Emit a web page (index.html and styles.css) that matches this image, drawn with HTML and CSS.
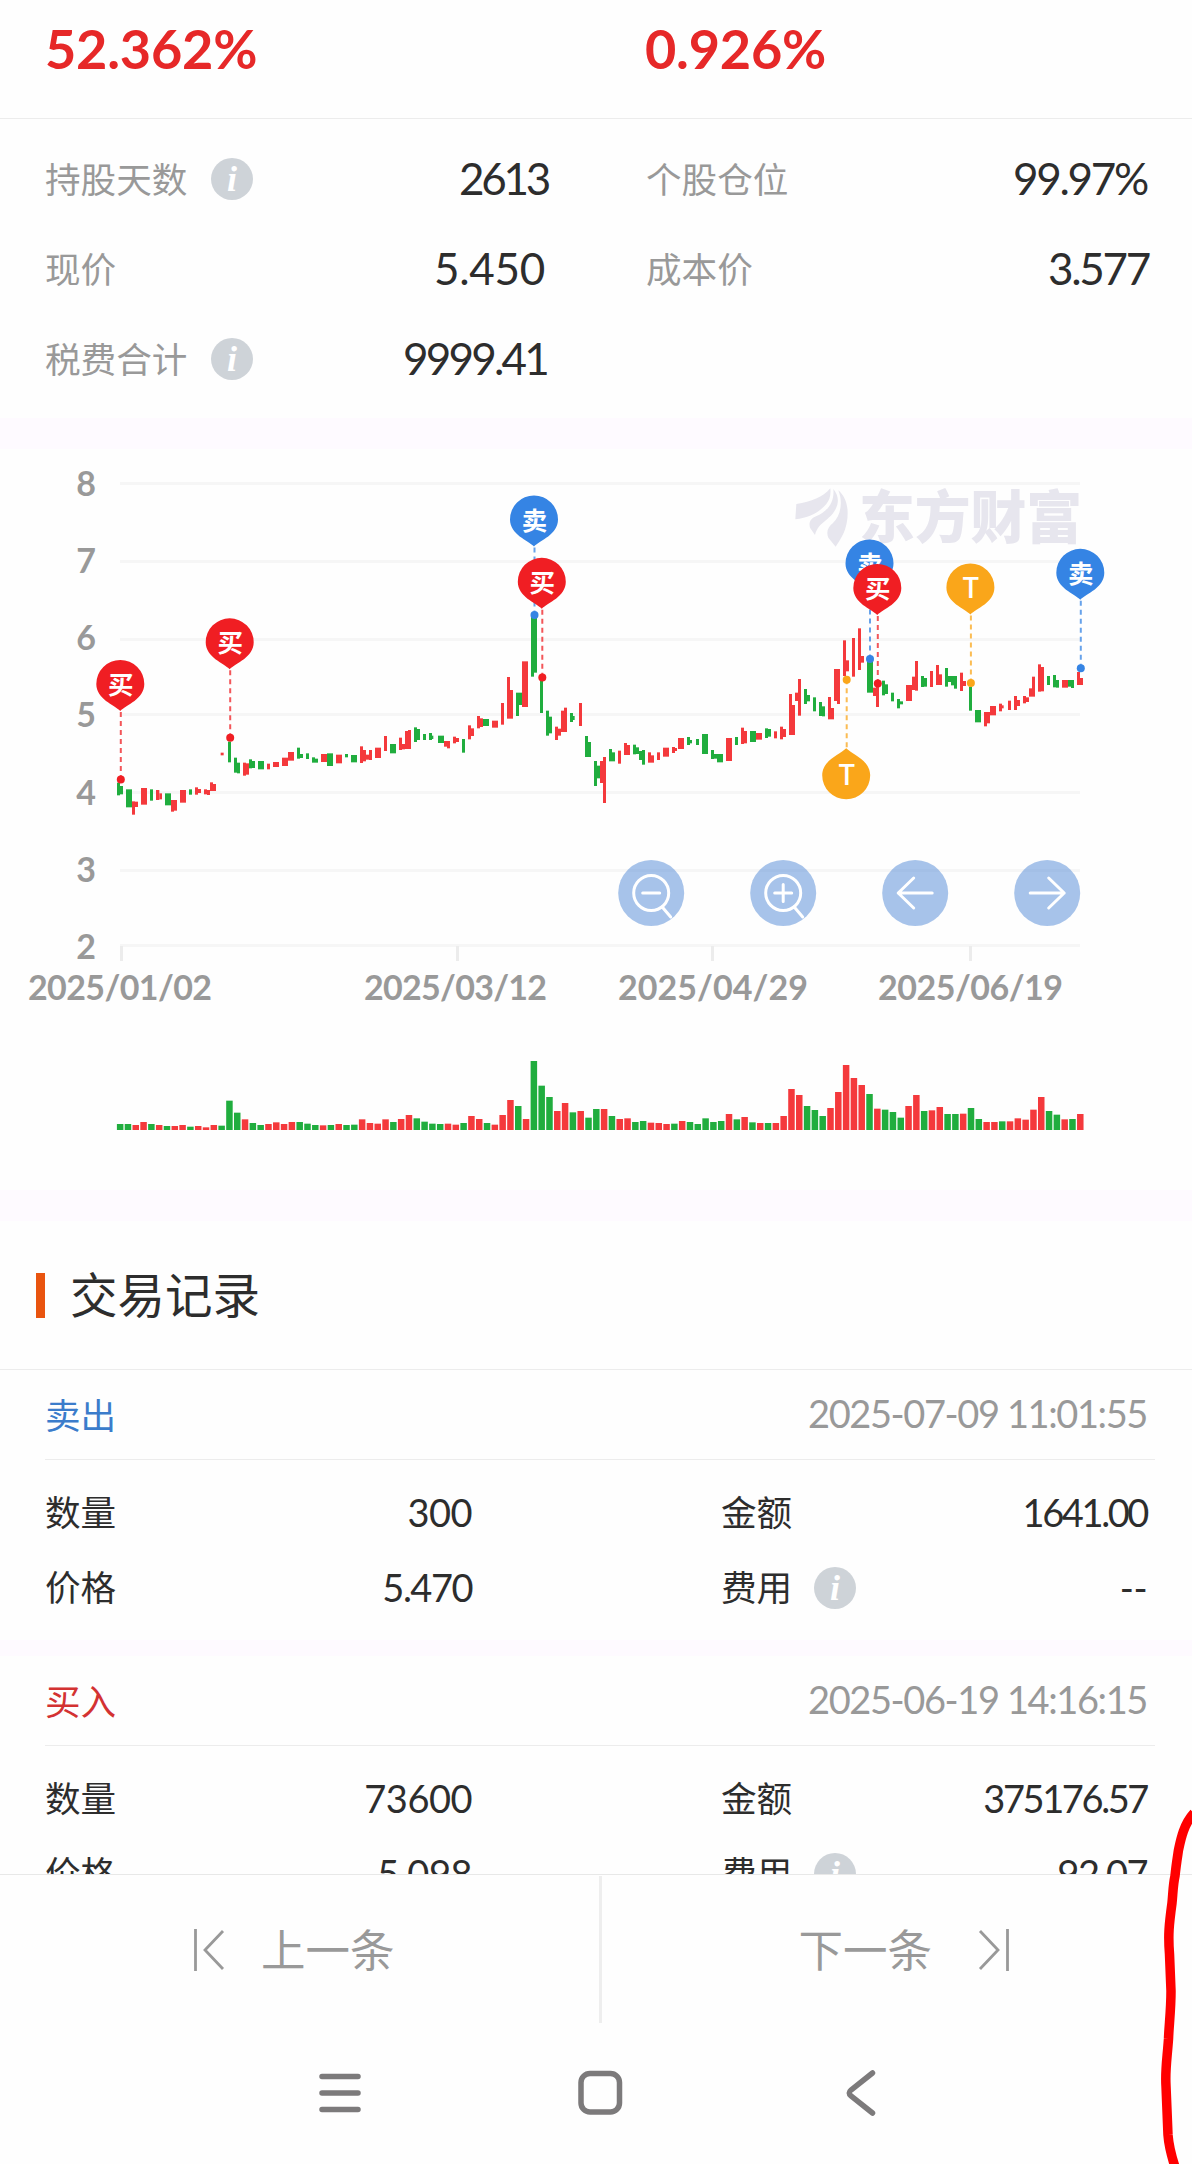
FILE: index.html
```html
<!DOCTYPE html>
<html lang="zh-CN">
<head>
<meta charset="utf-8">
<title>交易记录</title>
<link rel="stylesheet" href="styles.css">
</head>
<body>
<svg class="defs" width="0" height="0">
  <symbol id="info" viewBox="0 0 42 42">
    <circle cx="21" cy="21" r="21" fill="#ced3d8"/>
    <text x="21" y="33" text-anchor="middle" class="info-i">i</text>
  </symbol>
</svg>
<main class="screen">
  <section class="rates">
    <strong>52.362%</strong>
    <strong>0.926%</strong>
  </section>
  <section class="stats">
    <div class="stat"><span>持股天数</span><svg class="info"><use href="#info"/></svg><b class="n2613">2613</b></div>
    <div class="stat"><span>个股仓位</span><b class="pct">99.97%</b></div>
    <div class="stat"><span>现价</span><b class="price">5.450</b></div>
    <div class="stat"><span>成本价</span><b class="cost">3.577</b></div>
    <div class="stat"><span>税费合计</span><svg class="info"><use href="#info"/></svg><b class="fee">9999.41</b></div>
  </section>
  <section class="chart">
    <svg id="chart" viewBox="0 449 1192 741" width="1192" height="741">
      <g class="grid">
        <path d="M120 483.5H1080M120 561.5H1080M120 639.5H1080M120 714.5H1080M120 792.5H1080M120 870.5H1080M120 945.5H1080"/>
        <path class="ticks" d="M121.5 946V961M457.5 946V961M712.5 946V961M970.5 946V961"/>
      </g>
      <g class="axis" text-anchor="end">
        <text x="96" y="495.5">8</text><text x="96" y="573">7</text><text x="96" y="650">6</text><text x="96" y="727">5</text><text x="96" y="805">4</text><text x="96" y="881.500">3</text><text x="96" y="959">2</text>
      </g>
      <g class="axis">
        <text x="28" y="1000" textLength="184">2025/01/02</text>
        <text x="364" y="1000" textLength="183">2025/03/12</text>
        <text x="618" y="1000" textLength="190">2025/04/29</text>
        <text x="878" y="1000" textLength="185">2025/06/19</text>
      </g>
      <g class="brand">
        <g transform="translate(760 460) scale(.33333)">
          <path d="M106 178L109 132C155 125 188 112 211 85C213 105 209 120 199 132C176 158 148 173 106 178Z"/>
          <path d="M220 87C235 105 238 125 227 147C209 183 176 184 165 225L151 205C145 190 150 176 168 169C202 154 224 128 220 87Z"/>
          <path d="M235 91C263 116 267 153 260 190C254 220 241 239 227 260L205 233C198 216 203 202 219 189C241 169 250 128 235 91Z"/>
        </g>
        <text x="859" y="538" textLength="223" lengthAdjust="spacingAndGlyphs">东方财富</text>
      </g>
      <g id="candles"></g>
      <g id="volume"></g>
      <g id="pins"></g>
      <g class="tools">
        <g transform="translate(651.200 893)"><circle r="33"/><circle class="ln" r="17.500"/><path d="M-8.500 0H8.500M11 14L19.500 24"/></g>
        <g transform="translate(783.200 893)"><circle r="33"/><circle class="ln" r="17.500"/><path d="M-8.500 0H8.500M0 -8.500V8.500M11 14L19.500 24"/></g>
        <g transform="translate(915.200 893)"><circle r="33"/><path d="M17 0H-17M-1.500 -15L-17 0L-1.500 15"/></g>
        <g transform="translate(1047.200 893)"><circle r="33"/><path d="M-17 0H17M1.500 -15L17 0L1.500 15"/></g>
      </g>
    </svg>
  </section>
  <h2 class="title"><span>交易记录</span></h2>
  <section class="records">
    <article class="record">
      <header><span class="sell">卖出</span><time>2025-07-09 11:01:55</time></header>
      <div class="grid-rows">
        <span>数量</span><b>300</b><span class="right">金额</span><b class="narrow">1641.00</b>
        <span>价格</span><b class="mid">5.470</b><span class="right fee-label"><i>费用</i><svg class="info"><use href="#info"/></svg></span><b>--</b>
      </div>
    </article>
    <article class="record">
      <header><span class="buy">买入</span><time>2025-06-19 14:16:15</time></header>
      <div class="grid-rows">
        <span>数量</span><b>73600</b><span class="right">金额</span><b class="narrow">375176.57</b>
        <span>价格</span><b>5.098</b><span class="right fee-label"><i>费用</i><svg class="info"><use href="#info"/></svg></span><b class="mid">92.07</b>
      </div>
    </article>
  </section>
  <footer class="pager">
    <div class="prev">
      <svg width="32" height="44" viewBox="0 0 32 44"><path d="M2.500 1V43M30 3L12 22L30 41"/></svg>
      <span>上一条</span>
    </div>
    <div class="next">
      <span>下一条</span>
      <svg width="32" height="44" viewBox="0 0 32 44"><path d="M29.500 1V43M2 3L20 22L2 41"/></svg>
    </div>
  </footer>
  <nav class="sysnav">
    <svg width="42" height="46" viewBox="0 0 42 46"><path d="M3 6.500H39M3 23H39M3 39.500H39"/></svg>
    <svg width="46" height="46" viewBox="0 0 46 46"><rect x="4" y="3.500" width="38.500" height="38.500" rx="9"/></svg>
    <svg class="back" width="30" height="46" viewBox="0 0 30 46"><path d="M26.500 3L5 20Q1.500 23 5 26L26.500 43"/></svg>
  </nav>
  <svg class="scribble" width="40" height="364" viewBox="1152 1800 40 364"><path d="M1194 1813C1184 1824 1181 1838 1178.500 1850C1177 1860 1176 1866 1175 1876C1173 1885 1173 1893 1172 1903C1169 1925 1168 1935 1169.500 1954L1171 1991C1171 2010 1169 2025 1168.500 2039C1167 2060 1165 2070 1166 2086L1168 2135C1169 2148 1172 2158 1176 2170"/></svg>
</main>
<script src="chart.js"></script>
</body>
</html>
```
FILE: styles.css
```css
* { box-sizing: border-box; }
body {
  margin: 0;
  background: #fefefe;
  color: #2d2d2d;
  font-family: Lato, "Noto Sans CJK SC", sans-serif;
}
.defs { position: absolute; }
.screen {
  position: relative;
  display: flex;
  flex-direction: column;
  width: 1192px;
  height: 2164px;
  overflow: hidden;
}
b { font-weight: 400; }
i { font-style: normal; }
.info { width: 42px; height: 42px; flex: none; }
.info-i { font: italic 700 36px "Liberation Serif", serif; fill: #fff; }

.rates {
  display: grid;
  grid-template-columns: 600px 1fr;
  height: 119px;
  padding-left: 45px;
  border-bottom: 1px solid #ececec;
}
.rates strong {
  color: #e62828;
  font-size: 54px;
  line-height: 98px;
  letter-spacing: -.2px;
}
.stats {
  display: grid;
  grid-template-columns: 501px 501px;
  column-gap: 100px;
  grid-auto-rows: 90px;
  height: 299px;
  padding: 15px 45px 0;
}
.stat { display: flex; align-items: center; }
.stat span { padding-bottom: 4px; color: #999; font-size: 35.600px; }
.stat .info { margin-left: 24px; }
.stat b { margin-left: auto; padding-bottom: 2px; font-size: 44px; }
.stat .n2613 { margin-right: -2px; letter-spacing: -3.300px; }
.stat .pct { letter-spacing: -2.300px; }
.stat .price { margin-right: 1px; letter-spacing: -.300px; }
.stat .cost { margin-right: -2px; letter-spacing: -2.300px; }
.stat .fee { margin-right: -1px; letter-spacing: -2.800px; }

.chart {
  height: 803px;
  border-top: 31px solid #fefaff;
  border-bottom: 31px solid #fefaff;
}
.chart svg { display: block; }
.grid path { stroke: #f6f6f6; stroke-width: 3; }
.grid .ticks { stroke: #ececec; }
.axis { fill: #999; font-size: 34px; font-weight: 700; }
.brand { fill: #e7e6ee; font: 900 57px "Noto Sans CJK SC", sans-serif; }
.up { fill: #f4393c; }
.down { fill: #20ad3e; }
.tools circle { fill: #6495da; fill-opacity: .57; }
.tools path, .tools .ln {
  fill: none;
  stroke: #fff;
  stroke-width: 3;
  stroke-linecap: round;
  stroke-linejoin: round;
}
.pin text { fill: #fff; font: 700 25.500px "Noto Sans CJK SC", sans-serif; text-anchor: middle; }
.pin .letter { font: 500 28px "Noto Sans CJK SC", sans-serif; }
.pin .lead { stroke-width: 2; stroke-dasharray: 5 4; opacity: .75; }

.title {
  display: flex;
  align-items: center;
  height: 149px;
  margin: 0;
  padding-left: 36px;
  border-bottom: 1px solid #ececec;
  font-size: 47.500px;
  font-weight: 400;
}
.title span { padding-bottom: 6px; }
.title::before {
  content: "";
  width: 9px;
  height: 45px;
  margin-right: 25px;
  background: #e9540f;
}
.records { flex: 1; min-height: 0; overflow: hidden; }
.record { height: 286px; border-bottom: 16px solid #fefaff; }
.record header {
  display: flex;
  align-items: center;
  justify-content: space-between;
  height: 90px;
  margin: 0 37px 0 45px;
  padding: 0 8px 3px 0;
  border-bottom: 1px solid #ececec;
  font-size: 35.600px;
}
.record time { color: #999; font-size: 38px; letter-spacing: -1.400px; }
.sell { color: #3b7ccb; }
.buy { color: #d33232; }
.grid-rows {
  display: grid;
  grid-template-columns: 200px 227px 300px 375px;
  grid-auto-rows: 75px;
  align-items: center;
  padding: 15px 45px 0;
  font-size: 35.600px;
}
.grid-rows span { padding-bottom: 4px; }
.grid-rows b { padding-bottom: 2px; font-size: 38px; text-align: right; letter-spacing: -.5px; }
.grid-rows .mid { letter-spacing: -1.500px; }
.grid-rows .narrow { letter-spacing: -2.400px; }
.grid-rows .right { display: flex; align-items: center; padding-left: 249px; white-space: nowrap; }
.grid-rows .fee-label { padding-bottom: 0; }
.fee-label i { padding-bottom: 4px; }
.grid-rows .info { margin-left: 22px; }

.pager {
  display: grid;
  grid-template-columns: 602px 1fr;
  height: 149px;
  padding-top: 1px;
  border-top: 1px solid #e8e8e8;
  color: #999;
  font-size: 44.500px;
}
.pager > div { display: flex; align-items: center; }
.pager span { padding-bottom: 5px; }
.pager svg, .sysnav svg, .scribble { fill: none; }
.pager path { stroke: #999; stroke-width: 2.800; }
.prev {
  gap: 36px;
  padding-left: 193px;
  border-right: 3px solid #eee;
}
.next { justify-content: flex-end; gap: 46px; padding-right: 182px; }
.sysnav {
  display: flex;
  gap: 216px;
  height: 141px;
  padding: 47px 0 0 319px;
  stroke: #7c7a7b;
  stroke-width: 5.500;
  stroke-linecap: round;
}
.sysnav svg { flex: none; }
.sysnav .back { margin-left: 7px; }
.scribble {
  position: absolute;
  right: 0;
  bottom: 0;
  stroke: #f00;
  stroke-width: 9.500;
}
```
FILE: chart.js
```
const NS = 'http://www.w3.org/2000/svg';
const layer = id => document.getElementById(id);
function add(parent, tag, attrs, text) {
  const el = document.createElementNS(NS, tag);
  for (const k in attrs) el.setAttribute(k, attrs[k]);
  if (text) el.textContent = text;
  parent.appendChild(el);
  return el;
}

// Candle pieces as "left,top,right,bottom" in thirds of a pixel, grouped by x offset; r = up, g = down.
const candles = {
  60: 'g171,968,180,1006 g180,978,189,1003 g198,988,216,1042 r216,1024,225,1064 r225,1025,234,1041 r243,984,261,1034 g270,988,279,1022 r288,990,298,1020 r298,1000,306,1018 g315,1000,333,1036 r333,1020,342,1055 r342,1020,351,1052 r360,990,378,1028 g387,988,396,1004 r405,982,414,1004 r414,987,423,999 r432,988,441,1003 r441,990,450,1005 r450,967,459,993 r459,972,468,993 r482,878,491,886 g504,845,513,907 g522,893,531,938 g531,908,540,940 r549,908,558,947 r558,910,567,944 g567,898,576,925 g576,903,585,924 g594,903,612,928 r621,911,630,928 r639,906,657,921 r666,893,684,918 r684,876,702,902 g711,863,720,896 g720,882,729,894 g738,880,747,897 g756,892,765,908 g765,896,774,908 r783,882,801,906 g801,880,819,918 r828,884,846,910 g855,882,864,892 g873,885,891,907 r900,859,909,909 r909,870,918,904 r918,884,927,899 r927,870,936,900 r945,863,963,894 r972,828,981,873 g990,852,1008,880 r1017,833,1026,870 r1026,852,1035,868 r1035,813,1044,867 r1044,810,1053,867',
  400: 'g42,802,51,846 g51,807,60,840 g69,822,78,840 g87,819,96,840 g96,827,100,837 g114,827,132,849 r132,843,150,860 r141,843,150,865 r159,830,168,850 r168,834,177,846 g186,837,195,878 r204,796,213,838 r213,805,222,828 r231,768,240,805 r240,775,249,801 g249,777,267,798 r276,782,294,803 r303,729,312,794 r321,651,330,776 r330,690,339,776 g348,698,357,768 g357,698,366,735 r366,604,384,741 g393,470,402,650 g402,470,411,638 g420,660,429,759 g438,752,447,827 g447,770,456,820 r465,800,474,840 r474,806,483,827 r483,752,501,816 r492,743,501,816 g510,759,519,786 g519,768,524,780 r537,729,546,798 g555,828,564,891 g564,846,573,891 g582,903,591,978 g591,917,600,955 r600,903,609,969 r609,891,618,1029 g627,867,636,904 g636,877,645,904 r654,872,663,911 r672,849,681,885 r681,855,690,885 g699,854,708,883 g708,862,717,882 g717,873,735,900 g726,870,735,914 r744,877,753,908 r753,886,762,908 r771,877,780,900 r789,863,807,890 r816,861,825,879 r825,864,831,873 r834,834,852,867 g861,831,870,855 g870,840,876,850 g888,837,897,855 g906,822,924,882 g933,870,942,897 g942,882,951,896 g951,882,969,907 r978,834,996,903 g1005,831,1014,855 r1023,803,1032,852 r1032,813,1041,850 g1050,813,1068,846 r1068,819,1086,839 g1095,805,1104,834 g1104,807,1113,830 r1122,814,1131,835',
  760: 'r60,800,69,838 r69,807,78,831 r87,702,96,825 r96,735,105,825 r105,698,114,723 r114,657,123,767 g132,687,141,732 g141,705,150,724 g159,712,168,754 g177,726,186,768 g186,739,195,769 r204,711,213,778 r213,744,222,778 r222,627,240,723 r231,627,240,732 r249,541,258,648 r258,601,267,634 r276,534,285,650 r294,505,303,630 r303,588,312,608 g321,606,339,698 r339,683,348,708 r348,680,357,741 g366,662,375,706 g375,673,384,702 g393,698,402,724 g411,717,420,745 g420,724,429,733 r438,675,456,723 r456,650,465,690 r465,603,474,692 g483,648,492,681 g492,654,501,680 r510,633,519,681 r528,615,537,675 r537,643,546,675 g555,624,564,680 g564,648,573,666 g573,648,582,676 g582,648,591,686 r600,638,609,693 r609,663,618,678 g627,680,636,752 g645,750,663,787 r672,756,681,799 r681,756,690,790 r690,738,708,766 r717,731,726,754 r726,736,731,745 r744,722,753,750 r762,708,771,750 r771,720,780,738 r789,708,798,730 r798,712,807,726 r807,685,816,710 r816,650,825,710 r834,613,843,695 r843,621,852,694 g861,648,870,675 g879,645,888,682 g888,660,897,683 r906,660,924,683 g924,660,933,680 g933,660,942,684 r951,636,960,675 r960,654,969,675'
};
for (const x0 in candles) {
  for (const piece of candles[x0].split(' ')) {
    const [l, t, r, b] = piece.slice(1).split(',').map(Number);
    add(layer('candles'), 'rect', {
      class: piece[0] === 'r' ? 'up' : 'down',
      x: +x0 + l / 3, y: 460 + t / 3, width: (r - l) / 3, height: (b - t) / 3
    });
  }
}

// Daily volume, in thirds of a pixel.
const volume = 'g18 g18 r15 r24 g18 r15 g12 r12 r15 g10 r12 r8 r15 g13 g88 g52 r32 g21 g15 r18 r23 r18 r24 g24 g19 g15 r14 g15 r18 g15 g16 r32 r21 r19 r32 g24 r33 r45 g35 g25 g19 g18 r19 r16 g21 r42 r33 g21 r16 r45 r90 g72 r33 g207 g133 g99 r57 r81 g53 r57 g37 g63 r63 g42 r33 r35 g24 g27 r22 r21 r18 g19 r27 g24 g18 g35 g24 g27 r48 g32 r39 g23 r21 g21 r21 r42 r123 r105 g72 g60 g42 r66 r114 r195 r156 r135 g108 r64 g61 g54 g37 r72 r105 g57 r59 r69 g48 g48 r49 g66 g33 r24 r24 g26 r26 r35 r31 r61 r99 g57 g46 r32 g33 r48';
volume.split(' ').forEach((v, i) => {
  const h = v.slice(1) / 3;
  add(layer('volume'), 'rect', {
    class: v[0] === 'r' ? 'up' : 'down',
    x: 116.9 + i * 7.806, y: 1130 - h, width: 6.5, height: h
  });
});

// [label, colour, centre x, centre y, dot y]
const pins = [
  ['买', '#f01e23', 120.3, 684, 779.500], ['买', '#f01e23', 229.7, 642.300, 737.700],
  ['卖', '#3584e4', 534, 519.500, 615], ['买', '#f01e23', 541.8, 581.800, 677.500],
  ['卖', '#3584e4', 869.500, 563.500, 659], ['买', '#f01e23', 877.300, 588, 683.500],
  ['T', '#faa61a', 970.400, 587.500, 683], ['T', '#faa61a', 846.2, 775.300, 679.700],
  ['卖', '#3584e4', 1080.300, 572.800, 668.300]
];
for (const [label, color, x, y, dot] of pins) {
  const g = add(layer('pins'), 'g', { class: 'pin' });
  const s = dot > y ? 1 : -1;
  add(g, 'path', { class: 'lead', stroke: color, d: `M${x + .5} ${y + s * 28}V${dot}` });
  add(g, 'circle', { cx: x + .5, cy: dot, r: 4, fill: color });
  add(g, 'path', {
    fill: color, transform: `translate(${x} ${y}) scale(1 ${s})`,
    d: 'M0 27C-6 21-24 15-24 0A24 24 0 0 1 24 0C24 15 6 21 0 27Z'
  });
  add(g, 'text', { x: x + .5, y: y + 10, class: label === 'T' ? 'letter' : 'word' }, label);
}
```
